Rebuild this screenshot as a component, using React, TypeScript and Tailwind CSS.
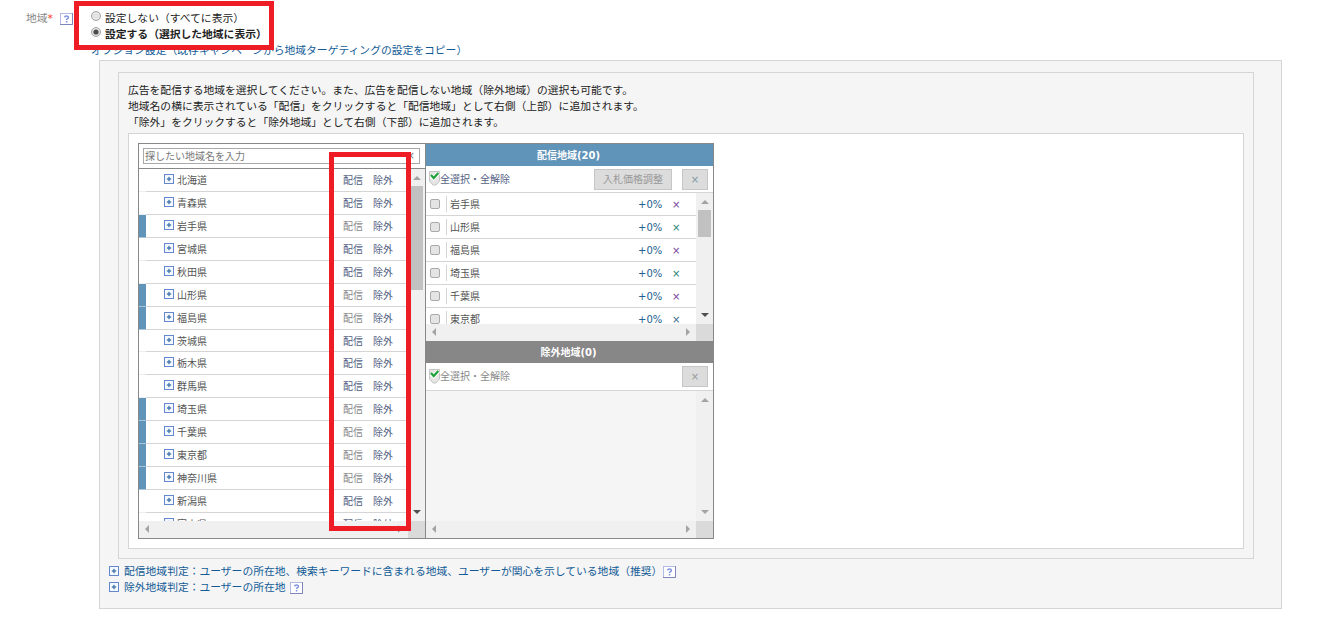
import React from "react";
import clsx from "clsx";

interface Region {
  name: string;
  delivered?: boolean;
  short?: boolean;
}

const regions: Region[] = [
  { name: "北海道" },
  { name: "青森県" },
  { name: "岩手県", delivered: true },
  { name: "宮城県" },
  { name: "秋田県" },
  { name: "山形県", delivered: true },
  { name: "福島県", delivered: true },
  { name: "茨城県", short: true },
  { name: "栃木県" },
  { name: "群馬県" },
  { name: "埼玉県", delivered: true },
  { name: "千葉県", delivered: true },
  { name: "東京都", delivered: true },
  { name: "神奈川県", delivered: true },
  { name: "新潟県" },
  { name: "富山県" },
];

const selected = [
  { name: "岩手県", color: "text-[#75439c]" },
  { name: "山形県", color: "text-[#258577]" },
  { name: "福島県", color: "text-[#75439c]" },
  { name: "埼玉県", color: "text-[#258577]" },
  { name: "千葉県", color: "text-[#75439c]" },
  { name: "東京都", color: "text-[#356d91]" },
];

const arrows = {
  up: "M0 4 L4 0 L8 4 Z",
  down: "M0 0 L4 4 L8 0 Z",
  left: "M4 0 L0 4 L4 8 Z",
  right: "M0 0 L4 4 L0 8 Z",
};

const Arrow: React.FC<{ dir: keyof typeof arrows; dark?: boolean }> = ({ dir, dark }) => {
  const vertical = dir === "up" || dir === "down";
  const w = vertical ? 8 : 4;
  const h = vertical ? 4 : 8;
  return (
    <svg width={w} height={h} viewBox={`0 0 ${w} ${h}`} className="shrink-0">
      <path d={arrows[dir]} fill={dark ? "#505050" : "#a3a3a3"} />
    </svg>
  );
};

const VScroll: React.FC<{ thumb?: string; activeDown?: boolean }> = ({ thumb, activeDown }) => (
  <div className="flex w-[17px] shrink-0 flex-col items-center justify-between bg-[#f0f0f0] pb-[7px]">
    <div className="flex flex-col items-center">
      <div className="flex h-[17px] items-center">
        <Arrow dir="up" />
      </div>
      {thumb && <div className={clsx("w-[13px] bg-[#c1c1c1]", thumb)} />}
    </div>
    <Arrow dir="down" dark={activeDown} />
  </div>
);

const HScroll = () => (
  <div className="flex h-[17px] shrink-0 bg-[#f0f0f0]">
    <div className="flex flex-1 items-center justify-between px-[6px] pb-px">
      <Arrow dir="left" />
      <Arrow dir="right" />
    </div>
    <div className="w-[17px] bg-[#dadada]" />
  </div>
);

const Help = () => (
  <svg width="13" height="12" viewBox="0 0 13 12" className="shrink-0">
    <rect x="0.5" y="0.5" width="12" height="11" fill="#fff" stroke="#b1bbe3" />
    <path d="M0 11.5 H12.5 V0" fill="none" stroke="#7f86bd" />
    <path d="M4.6 4.4 C4.7 2.5 8.5 2.5 8.4 4.4 C8.3 5.6 6.5 5.6 6.5 7" fill="none" stroke="#8294df" strokeWidth="1.5" />
    <rect x="5.8" y="8" width="1.6" height="1.5" fill="#8294df" />
  </svg>
);

const Plus = () => (
  <svg width="10" height="10" viewBox="0 0 10 10" className="mb-[2px] shrink-0">
    <rect x="0.5" y="0.5" width="9" height="9" fill="#f4f9ff" stroke="#6587cf" />
    <path d="M3 5 H7 M5 3 V7" stroke="#2c64a0" strokeOpacity="0.3" strokeWidth="2" />
    <path d="M2.8 5 H7.2 M5 2.8 V7.2" stroke="#2c64a0" strokeWidth="0.9" />
  </svg>
);

const Radio: React.FC<{ checked?: boolean }> = ({ checked }) => (
  <svg width="10" height="10" viewBox="0 0 10 10" className="shrink-0">
    <circle cx="5" cy="5" r="4.5" fill="#e4e4e4" stroke="#a4a4a4" />
    {checked && <circle cx="5" cy="5" r="2.6" fill="#4c4c4c" />}
  </svg>
);

const CheckAll: React.FC<{ label: string; muted?: boolean }> = ({ label, muted }) => (
  <div className={clsx("flex flex-1 items-center text-[10px]", muted ? "text-[#888]" : "text-[#52607f]")}>
    <svg width="11" height="15" viewBox="0 0 11 15" className="mb-px shrink-0">
      <path d="M0.5 0.5 H10.5 V10 L7 14 H4 L0.5 10 Z" fill="#e5e5e5" stroke="#c4c4c4" />
      <path d="M2 4.5 L4.7 7.3 L9.5 2" fill="none" stroke="#fff" strokeWidth="4" />
      <path d="M2 4 L4.7 7 L9.3 2" fill="none" stroke="#20a23a" strokeWidth="2.2" />
    </svg>
    <span className="pt-px">{label}</span>
  </div>
);

const RemoveButton: React.FC<{ muted?: boolean }> = ({ muted }) => (
  <button
    className={clsx(
      "h-[21px] w-[26px] border border-[#c6c6c6] bg-[#dcdcdc] text-[10px] leading-[19px]",
      muted ? "text-[#999]" : "text-[#8199a8]"
    )}
  >
    ×
  </button>
);

const RegionTree = () => (
  <div className="flex w-[287px] shrink-0 flex-col border-r border-[#888]">
    <div className="flex h-[25px] shrink-0 items-start border-b border-[#888] pt-1 pl-1">
      <div className="flex h-[16px] w-[277px] items-center justify-between border border-[#a9a9a9] px-px text-[10px] text-[#777]">
        <span className="pt-[2px]">探したい地域名を入力</span>
        <span className="pr-[3px]">×</span>
      </div>
    </div>
    <div className="flex h-[352px] shrink-0">
      <div className="flex-1 overflow-hidden">
        {regions.map((r) => (
          <div key={r.name} className={clsx("flex text-[10px]", r.short ? "h-[22px]" : "h-[23px]")}>
            <div className={clsx("w-[7px] border-b", r.delivered ? "border-[#a9c4d8] bg-[#6094b9]" : "border-[#eee]")} />
            <div className="flex flex-1 items-center border-b border-[#d5d5d5] pl-[18px]">
              <Plus />
              <span className="ml-[3px] w-[166px] pt-[2px] text-[#555]">{r.name}</span>
              <span className={clsx("w-[30px] pt-[2px]", r.delivered ? "text-[#888]" : "text-[#52607f]")}>配信</span>
              <span className="pt-[2px] text-[#52607f]">除外</span>
            </div>
          </div>
        ))}
      </div>
      <VScroll thumb="h-[104px]" activeDown />
    </div>
    <HScroll />
  </div>
);

const SelectedPanel = () => (
  <div className="flex flex-1 flex-col">
    <div className="h-[22px] shrink-0 bg-[#6094b9] pr-[2px] text-center text-[10px] leading-[24px] font-bold text-white">
      配信地域(20)
    </div>
    <div className="flex h-[27px] shrink-0 items-center border-b border-[#d5d5d5] pr-[5px] pl-[3px]">
      <CheckAll label="全選択・全解除" />
      <button className="mr-[10px] h-[21px] w-[78px] border border-[#c6c6c6] bg-[#dcdcdc] text-[10px] leading-[20px] text-[#999]">
        入札価格調整
      </button>
      <RemoveButton />
    </div>
    <div className="flex h-[131px] shrink-0">
      <div className="flex-1 overflow-hidden">
        {selected.map((r) => (
          <div key={r.name} className="flex h-[23px] items-center border-b border-[#d5d5d5] pl-1 text-[10px]">
            <div className="h-[10px] w-[10px] rounded-xs border border-[#aaa] bg-[#e4e4e4]" />
            <div className="ml-[6px] h-4 w-px bg-[#d5d5d5]" />
            <span className="ml-[3px] flex-1 pt-[2px] text-[#555]">{r.name}</span>
            <span className="w-[34px] pt-[2px] text-[#23608f]">+0%</span>
            <span className={clsx("w-[24px] pt-[2px]", r.color)}>×</span>
          </div>
        ))}
      </div>
      <VScroll thumb="h-[27px]" activeDown />
    </div>
    <HScroll />
    <div className="h-[22px] shrink-0 bg-[#878787] pr-[2px] text-center text-[10px] leading-[23px] font-bold text-white">
      除外地域(0)
    </div>
    <div className="flex h-[28px] shrink-0 items-center border-b border-[#d5d5d5] pr-[5px] pl-[3px]">
      <CheckAll label="全選択・全解除" muted />
      <RemoveButton muted />
    </div>
    <div className="flex h-[130px] shrink-0">
      <div className="flex-1 bg-[#f5f5f5]" />
      <VScroll />
    </div>
    <HScroll />
  </div>
);

const App: React.FC = () => {
  return (
    <div className="relative h-[627px] w-[1325px] overflow-hidden bg-white font-['DejaVu_Sans','Noto_Sans_CJK_JP',sans-serif] text-[10.79px] leading-4 whitespace-nowrap text-[#222]">
      {/* Target setting */}
      <div className="flex h-[60px] pt-[11px] pl-[26px]">
        <div className="flex h-4 w-[65px] items-center text-[#888]">
          地域<span className="text-[#f04020]">*</span>
          <span className="ml-[7px]">
            <Help />
          </span>
        </div>
        <div>
          <div className="flex gap-[4px]">
            <Radio />
            <span>設定しない（すべてに表示）</span>
          </div>
          <div className="flex gap-[4px] font-bold">
            <Radio checked />
            <span>設定する（選択した地域に表示）</span>
          </div>
          <div className="text-[#125b96]">オプション設定（既存キャンペーンから地域ターゲティングの設定をコピー）</div>
        </div>
      </div>

      <div className="ml-[99px] h-[549px] w-[1183px] border border-[#d5d5d5] bg-[#f5f5f5] pt-[11px] pl-[18px]">
        <div className="h-[487px] w-[1136px] border border-[#d5d5d5] pt-[10px] pl-[9px]">
          <p>広告を配信する地域を選択してください。また、広告を配信しない地域（除外地域）の選択も可能です。</p>
          <p>地域名の横に表示されている「配信」をクリックすると「配信地域」として右側（上部）に追加されます。</p>
          <p>「除外」をクリックすると「除外地域」として右側（下部）に追加されます。</p>
          <div className="mt-[2px] h-[416px] w-[1116px] border border-[#d5d5d5] bg-white pt-[9px] pl-[9px]">
            <div className="flex h-[396px] w-[576px] border border-[#888]">
              <RegionTree />
              <SelectedPanel />
            </div>
          </div>
        </div>

        {/* Matching rules */}
        <div className="mt-[5px] -ml-[9px] text-[#125b96]">
          <div className="flex h-4 items-center">
            <Plus />
            <span className="mr-px ml-[5px]">
              配信地域判定：ユーザーの所在地、検索キーワードに含まれる地域、ユーザーが関心を示している地域（推奨）
            </span>
            <Help />
          </div>
          <div className="flex h-4 items-center">
            <Plus />
            <span className="mr-[4px] ml-[5px]">除外地域判定：ユーザーの所在地</span>
            <Help />
          </div>
        </div>
      </div>

      {/* Highlight frames */}
      <div className="absolute top-px left-[74px] h-[49px] w-[200px] border-5 border-[#ee1c24]" />
      <div className="absolute top-[152px] left-[329px] h-[379px] w-[82px] border-5 border-[#ee1c24]" />
    </div>
  );
};

export default App;
